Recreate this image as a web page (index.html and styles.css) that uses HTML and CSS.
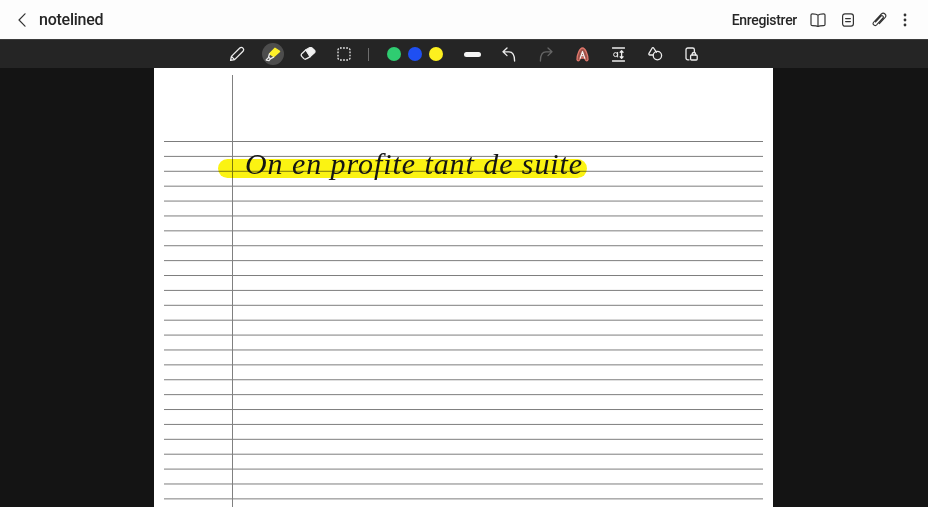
FILE: index.html
```html
<!DOCTYPE html>
<html lang="fr">
<head>
    <meta charset="UTF-8">
    <meta name="viewport" content="width=device-width, initial-scale=1.0">
    <title>notelined</title>
    <link rel="stylesheet" href="styles.css">
</head>
<body>
    <div class="topbar">
        <svg class="back" width="10" height="16" viewBox="0 0 10 16"><path d="M8 1.8 L2 8 L8 14.2"/></svg>
        <span class="title">notelined</span>
        <span class="save">Enregistrer</span>
        <svg class="top-icon book" width="16" height="14" viewBox="0 0 16 14"><path d="M8 2.2 C6.8 1 5 .8 2.4 .8 C1.4 .8 1 1.2 1 2 V11.4 C1 12.2 1.4 12.6 2.4 12.6 C5 12.6 6.8 12.6 8 13.4 C9.2 12.6 11 12.6 13.6 12.6 C14.6 12.6 15 12.2 15 11.4 V2 C15 1.2 14.6 .8 13.6 .8 C11 .8 9.2 1 8 2.2 V13.4"/></svg>
        <svg class="top-icon note" width="14" height="14" viewBox="0 0 14 14"><rect x="1.6" y=".8" width="10.8" height="12.4" rx="2.4"/><path d="M4.6 5.6 H9.4 M4.6 8.6 H9.4"/></svg>
        <svg class="top-icon clip" width="16" height="16" viewBox="0 0 16 16"><path d="M4.4 10 L10 4 C11.2 2.8 13.2 4.6 12 6 L5.6 12.8 C3.6 14.8 .8 12.2 2.8 10 L10.4 2 C12.8 -.2 16.2 3 14.2 5.4 L8.4 11.6"/></svg>
        <svg class="top-icon dots" width="4" height="14" viewBox="0 0 4 14"><circle cx="2" cy="2" r="1.4"/><circle cx="2" cy="7" r="1.4"/><circle cx="2" cy="12" r="1.4"/></svg>
    </div>

    <div class="toolbar">
        <div class="tool">
            <svg width="16" height="16" viewBox="0 0 16 16"><path d="M1.6 14.4 L2.4 10.4 L10.8 2 C11.8 1 13 1.2 13.9 2.1 C14.8 3 15 4.2 14 5.2 L5.6 13.6 Z M2.4 10.4 L5.6 13.6"/></svg>
        </div>
        <div class="tool">
            <span class="active-dot"></span>
            <svg class="over" width="16" height="16" viewBox="0 0 16 16"><path class="marker" d="M4.6 7.6 L10 2.2 L14.6 5.4 L9 10.6 Z"/><path d="M4.4 8 L3.6 11 L5.4 12.8 L8.6 11.2 M3.6 11.4 L1.2 14 L4 14.6 L5.4 12.8"/></svg>
        </div>
        <div class="tool">
            <svg width="16" height="14" viewBox="0 0 16 14"><path class="solid" d="M6 2.8 L9.4 .8 C10.4 .3 11.2 .4 12 1 L14.4 3.2 C15.2 4 15.2 5 14.4 5.8 L10.2 9.6 Z"/><path d="M6 2.8 L2 6.4 C1 7.4 1 8.4 1.8 9.4 L3.6 11.4 C4.6 12.4 5.8 12.4 6.8 11.6 L10.2 9.6 Z"/></svg>
        </div>
        <div class="tool">
            <svg width="14" height="14" viewBox="0 0 14 14"><rect class="dashed" x="1" y="1" width="12" height="12" rx="2"/></svg>
        </div>
        <span class="divider"></span>
        <span class="swatch green"></span>
        <span class="swatch blue"></span>
        <span class="swatch yellow"></span>
        <div class="tool thickness-box"><span class="thickness"></span></div>
        <div class="tool">
            <svg width="14" height="15" viewBox="0 0 14 15"><path d="M5 1 L1 4.8 L5 8.6 M1 4.8 H7 C10.4 4.8 12.6 7.4 12.6 14"/></svg>
        </div>
        <div class="tool off">
            <svg width="14" height="15" viewBox="0 0 14 15"><path d="M9 1 L13 4.8 L9 8.6 M13 4.8 H7 C3.6 4.8 1.4 7.4 1.4 14"/></svg>
        </div>
        <div class="tool">
            <svg width="13" height="15" viewBox="0 0 13 15"><path class="a-out" d="M1 12.6 C.8 8.4 3.6 1 6.5 1 C9.4 1 12.2 8.4 12 12.6 C11.6 14.4 10 14.2 9.4 12.8 L8.8 11 H4.2 L3.6 12.8 C3 14.2 1.4 14.4 1 12.6 Z"/><path class="a-in" d="M4.2 11.2 L6.5 4.4 L8.8 11.2 M5 8.8 H8"/></svg>
        </div>
        <div class="tool">
            <svg width="13" height="15" viewBox="0 0 13 15"><path d="M.4 1 H12.6 M.4 14 H12.6 M9.6 4 V11 M8.2 5.2 L9.6 3.8 L11 5.2 M8.2 9.8 L9.6 11.2 L11 9.8"/><circle class="thin" cx="3.6" cy="7.6" r="2"/><path class="thin" d="M5.6 5.4 V10"/></svg>
        </div>
        <div class="tool">
            <svg width="15" height="14" viewBox="0 0 15 14"><path d="M8.4 5.2 L5.6 1 C5.2 .5 4.6 .5 4.2 1 L1 6.4 C.6 7.2 1 8 1.8 8 H5"/><circle cx="9.4" cy="8.6" r="4.2"/></svg>
        </div>
        <div class="tool">
            <svg width="13" height="14" viewBox="0 0 13 14"><path d="M4 12.8 H2.8 C1.8 12.8 1 12 1 11 V2.8 C1 1.8 1.8 1 2.8 1 H7.6 C8.6 1 9.4 1.8 9.4 2.8 V4.6"/><rect x="5.6" y="8" width="6.6" height="5" rx="1"/><path d="M7.2 8 V7 C7.2 5 10.6 5 10.6 7 V8"/></svg>
        </div>
    </div>

    <div class="workspace">
        <div class="paper">
            <div class="ruled"></div>
            <span class="margin-line"></span>
            <span class="highlight"></span>
            <span class="ink">On en profite tant de suite</span>
        </div>
    </div>
</body>
</html>
```

FILE: styles.css
```css
* {
    margin: 0;
    padding: 0;
    box-sizing: border-box;
}

html, body {
    height: 100%;
    overflow: hidden;
}

body {
    display: flex;
    flex-direction: column;
    font-family: Roboto, 'Liberation Sans', sans-serif;
    background: #141414;
}

svg {
    fill: none;
    stroke-linecap: round;
    stroke-linejoin: round;
    display: block;
}

.topbar {
    height: 40px;
    flex: none;
    display: flex;
    align-items: center;
    background: #fdfdfd;
    border-bottom: 1px solid #3c3c3c;
    color: #262626;
}

.back {
    margin-left: 17px;
    stroke: #333;
    stroke-width: 1.2;
}

.title {
    margin-left: 12px;
    font-size: 16px;
    font-weight: 500;
    letter-spacing: -0.25px;
}

.save {
    margin-left: auto;
    font-size: 14px;
    font-weight: 500;
    letter-spacing: -0.3px;
}

.top-icon {
    stroke: #333;
    stroke-width: 1.2;
}

.book { margin-left: 13px; }
.note { margin-left: 15px; }
.clip { margin-left: 16px; stroke-width: 1.1; }
.dots { margin-left: 16px; margin-right: 21px; fill: #333; stroke: none; }

.toolbar {
    height: 28px;
    flex: none;
    display: flex;
    align-items: center;
    padding-left: 219px;
    background: #252525;
}

.tool {
    position: relative;
    width: 35.8px;
    height: 28px;
    flex: none;
    display: flex;
    align-items: center;
    justify-content: center;
}

.thickness-box ~ .tool {
    width: 36.5px;
}

.tool svg {
    stroke: #ececec;
    stroke-width: 1.3;
}

.tool svg .solid { fill: #f2f2f2; }
.tool svg .marker { fill: #fdf02a; stroke: #fdf02a; }
.tool svg .dashed { stroke-dasharray: 1.7 1.4; stroke-linecap: butt; }
.tool svg .thin { stroke-width: 1; }
.tool svg .a-out { fill: #9c5148; stroke: #e0776c; }
.tool svg .a-in { stroke: #f4f4f4; stroke-width: 1.1; }

.tool.off svg {
    stroke: #666;
}

.active-dot {
    position: absolute;
    left: 7px;
    top: 3px;
    width: 22px;
    height: 22px;
    border-radius: 50%;
    background: #4d4d4d;
}

.over {
    position: relative;
}

.divider {
    width: 1px;
    height: 13px;
    margin: 0 6px 0 5.6px;
    background: #6e6e6e;
}

.swatch {
    width: 14px;
    height: 14px;
    flex: none;
    margin: 0 3.5px;
    border-radius: 50%;
}

.swatch:nth-of-type(2) { margin-left: 12px; }

.green { background: #2fcc71; }
.blue { background: #1f4ff2; }
.yellow { background: #fdf01f; }

.thickness-box {
    margin-left: 8.5px;
    width: 36px;
}

.thickness {
    width: 17px;
    height: 5px;
    border-radius: 3px;
    background: #f5f5f5;
}

.workspace {
    flex: 1;
    min-height: 0;
    display: flex;
    justify-content: center;
    padding-right: 1px;
}

.paper {
    position: relative;
    width: 619px;
    height: 100%;
    padding: 73px 10px 0;
    background: #fff;
    overflow: hidden;
}

.ruled {
    height: 100%;
    background-image: linear-gradient(#7c7c7c 1px, transparent 1px);
    background-size: 100% 14.9px;
}

.margin-line {
    position: absolute;
    left: 78px;
    top: 7px;
    bottom: 0;
    width: 1px;
    background: #808080;
}

.highlight {
    position: absolute;
    left: 64px;
    top: 91px;
    width: 369px;
    height: 19px;
    border-radius: 10px;
    background: #fbf312;
    mix-blend-mode: multiply;
}

.ink {
    position: absolute;
    left: 91px;
    top: 79px;
    font-family: 'Liberation Serif', serif;
    font-style: italic;
    font-size: 30px;
    letter-spacing: 0.93px;
    line-height: 34px;
    white-space: nowrap;
    color: #141414;
}
```
